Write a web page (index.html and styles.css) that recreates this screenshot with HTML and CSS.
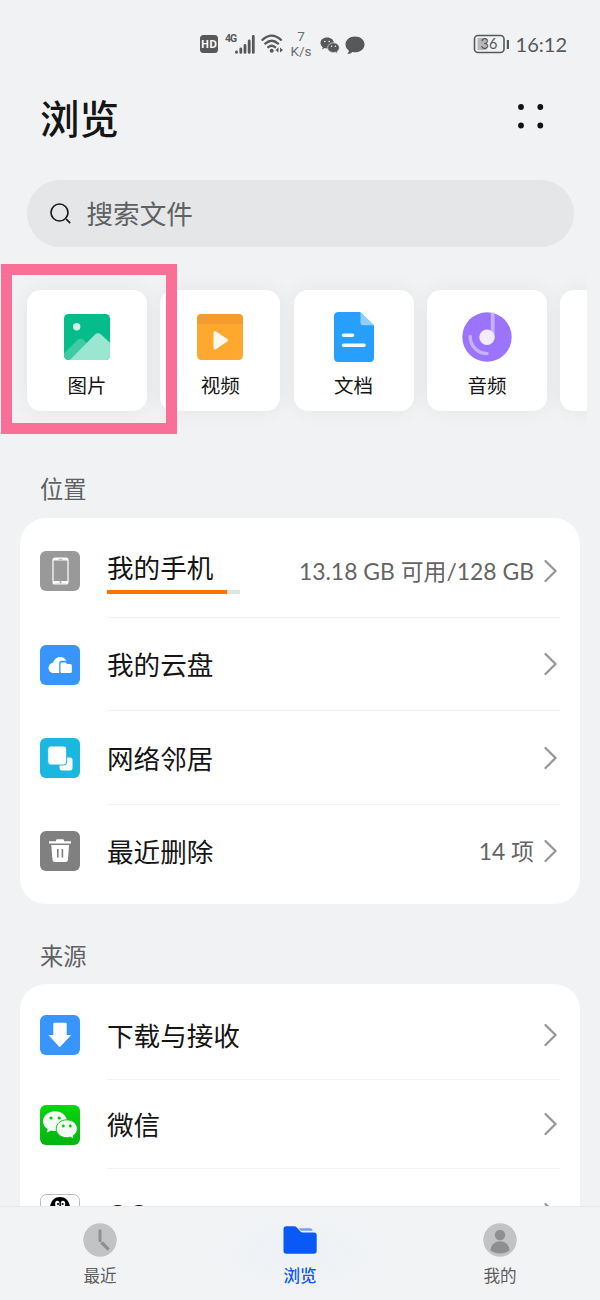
FILE: index.html
```html
<!DOCTYPE html>
<html lang="zh-CN">
<head>
<meta charset="utf-8">
<title>浏览</title>
<link rel="stylesheet" href="styles.css">
</head>
<body>
<div class="phone">
  <header class="status">
    <div class="status-left">
      <svg class="ic-hd" width="18" height="18" viewBox="0 0 18 18"><rect width="18" height="18" rx="3.5" fill="#56585a"/><text x="9" y="13" text-anchor="middle" class="hd-text">HD</text></svg>
      <span class="net">4G</span>
      <svg class="ic-signal" width="20" height="19" viewBox="0 0 20 19" stroke="#56585a" stroke-width="2.8" stroke-linecap="round"><path d="M1.5 17v.4M5.8 14v3.4M10 10.5v6.9M14.2 6v11.4M18.3 1.5v15.9"/></svg>
      <svg class="ic-wifi" width="23" height="20" viewBox="0 0 23 20"><g fill="none" stroke="#56585a" stroke-width="2.3" stroke-linecap="round"><path d="M1.4 5.8q9.3-8.4 18.6 0M4.3 9.6q6.4-5.8 12.8 0M7.3 13.2q3.4-2.8 6.8 0"/></g><circle cx="10.7" cy="16.8" r="2" fill="#56585a"/><path d="M17.5 13.5v5l-3-2.5zM19 13.5v5l3-2.5z" fill="#56585a"/></svg>
      <span class="speed"><span>7</span><span>K/s</span></span>
      <svg class="ic-wechat" width="20" height="17" viewBox="0 0 20 17"><path d="M7 .6C3.200.6.500 3 .5 6c0 1.800.9 3.200 2.300 4.200L2 12.500l2.700-1.400c.7.200 1.500.3 2.300.3 4 0 6.800-2.400 6.800-5.400S11 .6 7 .6z" fill="#56585a"/><path d="M13.500 5.800c-3.400 0-5.900 2.200-5.900 4.900s2.500 4.800 5.900 4.800c.7 0 1.400-.1 2-.3l2.200 1.200-.6-1.900c1.400-1 2.200-2.300 2.200-3.800 0-2.700-2.500-4.900-5.800-4.900z" fill="#56585a" stroke="#f1f2f4" stroke-width=".6"/><g fill="#f1f2f4"><circle cx="4.800" cy="4.500" r=".8"/><circle cx="9.200" cy="4.500" r=".8"/><circle cx="11.600" cy="9.200" r=".7"/><circle cx="15.400" cy="9.200" r=".7"/></g></svg>
      <svg class="ic-chat" width="20" height="19" viewBox="0 0 20 19"><path d="M10 .6C4.600.6.500 4 .5 8.400c0 2.600 1.300 4.600 3.300 6 .1 1.400-.5 2.500-1.600 3.500 2.200.1 4-.6 5.200-1.900.8.200 1.700.2 2.600.2 5.400 0 9.500-3.400 9.500-7.800S15.400.6 10 .6z" fill="#56585a"/></svg>
    </div>
    <div class="status-right">
      <svg width="36" height="20" viewBox="0 0 36 20"><rect x="1.500" y="1.500" width="29.500" height="17" rx="3.500" fill="none" stroke="#56585a" stroke-width="1.600"/><rect x="4.500" y="4" width="9" height="12" rx="1" fill="#b5b7b9"/><path d="M35 6v9" stroke="#56585a" stroke-width="2.400"/><text x="16" y="15" text-anchor="middle" class="battery-text">36</text></svg>
      <span class="clock">16:12</span>
    </div>
  </header>

  <div class="title-bar">
    <h1>浏览</h1>
    <svg class="more" width="28" height="26" viewBox="0 0 28 26" fill="#111"><circle cx="4" cy="4" r="2.900"/><circle cx="23.300" cy="4" r="2.900"/><circle cx="4" cy="22.500" r="2.900"/><circle cx="23.300" cy="22.500" r="2.900"/></svg>
  </div>

  <div class="search">
    <svg width="22" height="22" viewBox="0 0 22 22" fill="none" stroke="#1b1c1e" stroke-width="1.700" stroke-linecap="round"><circle cx="9.500" cy="9.500" r="8.500"/><path d="M16.700 16.700l3 3"/></svg>
    <span>搜索文件</span>
  </div>

  <div class="categories">
    <div class="cat highlighted">
      <svg width="50" height="50" viewBox="0 0 50 50"><defs><clipPath id="pic"><rect x="2" y="2" width="46" height="46" rx="4.500"/></clipPath></defs><g clip-path="url(#pic)"><path d="M0 0h50v50H0z" fill="#04bd8b"/><path d="M0 43.500L15.500 28q3-2.600 6 0l4 4V50H0z" fill="#3fcba4"/><path d="M6 50L33 22.500q3-2.700 6 0l11 10V50z" fill="#9be6d0"/><circle cx="14.700" cy="14.800" r="3.700" fill="#cef3e8"/></g></svg>
      <span>图片</span>
    </div>
    <div class="cat">
      <svg width="50" height="50" viewBox="0 0 50 50"><rect x="2" y="2" width="46" height="46" rx="4.500" fill="#fea82f"/><path d="M2 12V6.500Q2 2 6.500 2h37Q48 2 48 6.500V12z" fill="#f49d2e"/><path d="M20 20.500v15.600l11.500-7.800z" fill="#fff8ee" stroke="#fff8ee" stroke-width="3" stroke-linejoin="round"/></svg>
      <span>视频</span>
    </div>
    <div class="cat">
      <svg width="50" height="50" viewBox="0 0 50 50"><path d="M9.500 0H31l14 13.500V45.500Q45 50 40.500 50h-31Q5 50 5 45.500v-41Q5 0 9.500 0z" fill="#279fff"/><path d="M31.500 0L45 13.300H34q-2.500 0-2.500-2.500z" fill="#8ecffd"/><path d="M14.500 23.300h9M14.500 33.300H35" stroke="#f2f9ff" stroke-width="3.600" stroke-linecap="round"/></svg>
      <span>文档</span>
    </div>
    <div class="cat">
      <svg width="50" height="50" viewBox="0 0 50 50"><circle cx="25" cy="25" r="24.700" fill="#9c74fb"/><path d="M28.800.700h3.800V25h-3.800z" fill="#c7b1fd"/><path d="M8.200 24.500A17 17 0 0 0 25 41.600" fill="none" stroke="#c7b1fd" stroke-width="3.400" stroke-linecap="round"/><circle cx="25" cy="25.200" r="7.700" fill="#f1ecfe"/></svg>
      <span>音频</span>
    </div>
    <div class="cat"></div>
  </div>

  <main class="lists">
    <h2 class="heading-place">位置</h2>
    <section class="panel place">
      <div class="row">
        <svg class="icon" width="40" height="40" viewBox="0 0 40 40"><rect width="40" height="40" rx="6" fill="#999"/><rect x="13" y="7" width="15" height="26" rx="2.300" fill="none" stroke="#fff" stroke-width="1.200"/><path d="M13 8.300h15M13 31.200h15" stroke="#fff" stroke-width="2.600"/><circle cx="20.500" cy="31.300" r="1" fill="#999"/><path d="M18.500 8.300h4" stroke="#999" stroke-width=".8"/></svg>
        <div class="body"><div class="storage"><span class="label">我的手机</span><div class="meter"><div class="used" style="width:90%"></div></div></div><span class="info">13.18 GB 可用/128 GB</span><svg class="chev" width="14" height="24" viewBox="0 0 14 24"><path d="M1.500 2l10 10-10 10"/></svg></div>
      </div>
      <div class="row">
        <svg class="icon" width="40" height="40" viewBox="0 0 40 40"><rect width="40" height="40" rx="6" fill="#3795fd"/><path d="M14 28c-3.200 0-5.500-2.200-5.500-5.100 0-2.700 1.900-4.700 4.500-5.100 1-3.600 3.700-5.900 7.300-5.900 2.700 0 5 1.500 6.100 3.900h-5q-2.200 0-2.200 2.200v10z" fill="#fff"/><path d="M21.500 17.500h4l1.600 1.600h3.200q1.500 0 1.500 1.500V26.500q0 1.500-1.500 1.500h-8.800q-1 0-1-1V18.500q0-1 1-1z" fill="#fff"/></svg>
        <div class="body"><span class="label">我的云盘</span><svg class="chev" width="14" height="24" viewBox="0 0 14 24"><path d="M1.500 2l10 10-10 10"/></svg></div>
      </div>
      <div class="row">
        <svg class="icon" width="40" height="40" viewBox="0 0 40 40"><rect width="40" height="40" rx="6" fill="#1ab7e1"/><rect x="19.500" y="19.500" width="13" height="13" rx="2.500" fill="#fff"/><rect x="7.700" y="8" width="19" height="19" rx="3" fill="#fff" stroke="#1ab7e1" stroke-width="1"/></svg>
        <div class="body"><span class="label">网络邻居</span><svg class="chev" width="14" height="24" viewBox="0 0 14 24"><path d="M1.500 2l10 10-10 10"/></svg></div>
      </div>
      <div class="row">
        <svg class="icon" width="40" height="40" viewBox="0 0 40 40"><rect width="40" height="40" rx="6" fill="#808080"/><path d="M9 10.300h7V9.500q0-1.200 1.200-1.200h5.600q1.200 0 1.200 1.200v.8h7v2.300H9zM11.300 14h17.800l-1.200 15q-.2 2-2.200 2h-11q-2 0-2.200-2z" fill="#fff"/><path d="M17.800 18v8.500M22.400 18v8.500" stroke="#808080" stroke-width="1.600"/></svg>
        <div class="body"><span class="label">最近删除</span><span class="info">14 项</span><svg class="chev" width="14" height="24" viewBox="0 0 14 24"><path d="M1.500 2l10 10-10 10"/></svg></div>
      </div>
    </section>

    <h2 class="heading-source">来源</h2>
    <section class="panel source">
      <div class="row">
        <svg class="icon" width="40" height="40" viewBox="0 0 40 40"><rect width="40" height="40" rx="6" fill="#3795fd"/><path d="M14.500 7.700h11q1.200 0 1.200 1.200v11h4.500L20.500 31.500q-.8.600-1.600 0L8.500 20h4.800V8.900q0-1.200 1.200-1.200z" fill="#fff"/></svg>
        <div class="body"><span class="label">下载与接收</span><svg class="chev" width="14" height="24" viewBox="0 0 14 24"><path d="M1.500 2l10 10-10 10"/></svg></div>
      </div>
      <div class="row">
        <svg class="icon" width="40" height="40" viewBox="0 0 40 40"><defs><linearGradient id="wx" x2="0" y2="1"><stop stop-color="#05d60c"/><stop offset="1" stop-color="#06b312"/></linearGradient></defs><rect width="40" height="40" rx="6" fill="url(#wx)"/><path d="M15 6.200C8.300 6.200 3 10.700 3 16.200c0 3.200 1.800 6 4.700 7.800l-1 3.700 4.300-2.200c1.300.4 2.600.5 4 .5 6.700 0 12-4.300 12-9.800S21.700 6.200 15 6.200z" fill="#f4faf4"/><path d="M26.800 14.800c-6 0-10.600 3.900-10.600 8.900s4.600 9 10.600 9c1.300 0 2.500-.2 3.600-.5l3.500 1.800-.8-3.100c2.700-1.700 4.300-4.200 4.300-7.200 0-5-4.700-8.900-10.600-8.900z" fill="#f4faf4" stroke="#08c510" stroke-width="1"/><g fill="#08c510"><circle cx="11" cy="13" r="1.600"/><circle cx="19.200" cy="13" r="1.600"/><circle cx="23.300" cy="21" r="1.400"/><circle cx="30.300" cy="21" r="1.400"/></g></svg>
        <div class="body"><span class="label">微信</span><svg class="chev" width="14" height="24" viewBox="0 0 14 24"><path d="M1.500 2l10 10-10 10"/></svg></div>
      </div>
      <div class="row">
        <svg class="icon" width="40" height="40" viewBox="0 0 40 40"><rect x=".500" y=".500" width="39" height="39" rx="6" fill="#fff" stroke="#bbb"/><path d="M9.500 18C9.500 8 13.500 3 20 3s10.500 5 10.500 15v12h-21z" fill="#000"/><ellipse cx="17.300" cy="10" rx="2.200" ry="3.200" fill="#fff"/><ellipse cx="23" cy="10" rx="2.200" ry="3.200" fill="#fff"/><circle cx="18" cy="10" r="1.100"/><circle cx="22.600" cy="10" r="1.100"/></svg>
        <div class="body"><span class="label latin">QQ</span><svg class="chev" width="14" height="24" viewBox="0 0 14 24"><path d="M1.500 2l10 10-10 10"/></svg></div>
      </div>
    </section>
  </main>

  <nav class="tabs">
    <div class="tab">
      <svg width="34" height="34" viewBox="0 0 34 34"><circle cx="17" cy="17" r="16.700" fill="#c2c3c5"/><path d="M17 7.800v10" stroke="#8e8f91" stroke-width="3" stroke-linecap="round"/><path d="M19.500 20.500l5 5" stroke="#8e8f91" stroke-width="3.200" stroke-linecap="square"/></svg>
      <span>最近</span>
    </div>
    <div class="tab active">
      <svg width="34" height="34" viewBox="0 0 34 34"><path d="M3.300 3.300h8.200q1.200 0 2 .9l4.200 4.600q.8.800 2 .8H31q2.700 0 2.700 2.700V28q0 2.700-2.700 2.700H3.300Q.5 30.700.5 28V6q0-2.700 2.800-2.700z" fill="#0a59f7"/><path d="M15.800 5.200h11.800q1.500 0 2.200 2.500H18z" fill="#6da0f8"/></svg>
      <span>浏览</span>
    </div>
    <div class="tab">
      <svg width="34" height="34" viewBox="0 0 34 34"><circle cx="17" cy="17" r="16.700" fill="#c2c3c5"/><circle cx="17" cy="12" r="5.200" fill="#8e8f91"/><path d="M7.300 27.200C8.500 21.500 12 18.300 17 18.300s8.500 3.200 9.700 8.900Q22.500 30.500 17 30.500t-9.700-3.300z" fill="#8e8f91"/></svg>
      <span>我的</span>
    </div>
  </nav>
</div>
</body>
</html>
```
FILE: styles.css
```css
*, *::before, *::after { box-sizing: border-box; }
body {
  margin: 0;
  background: #f1f2f4;
  font-family: "Noto Sans CJK SC", sans-serif;
  color: #151515;
}
svg { display: block; flex: none; }
h1, h2 { margin: 0; font-weight: 400; }
.phone {
  width: 600px;
  height: 1300px;
  display: flex;
  flex-direction: column;
  overflow: hidden;
}

.status {
  height: 88px;
  flex: none;
  display: flex;
  justify-content: space-between;
  align-items: center;
  padding: 0 33px 0 200px;
  color: #56585a;
  font-family: Lato, sans-serif;
}
.status-left, .status-right { display: flex; align-items: center; }
.hd-text { font: 700 10.5px "Open Sans", sans-serif; fill: #fff; }
.net {
  font: 700 10.5px/12px Roboto, sans-serif;
  margin: 0 0 10px 7px;
  width: 10px;
  letter-spacing: -1px;
  white-space: nowrap;
}
.ic-wifi { margin-left: 6px; }
.speed {
  display: flex;
  flex-direction: column;
  align-items: center;
  width: 22px;
  margin-left: 6px;
  font: 13.5px/15px Roboto, sans-serif;
  color: #6c6e70;
}
.ic-wechat { margin: 3px 0 0 8px; }
.ic-chat { margin: 2px 0 0 5px; }
.battery-text { font: 14.5px Lato, sans-serif; fill: #56585a; }
.clock { font-size: 20px; line-height: 24px; margin-left: 7px; }

.title-bar {
  height: 92px;
  flex: none;
  display: flex;
  justify-content: space-between;
  padding: 0 55.5px 0 40px;
}
.title-bar h1 { font-size: 39.5px; line-height: 57px; font-weight: 500; }
.more { margin-top: 15px; }

.search {
  flex: none;
  height: 67px;
  margin: 0 26.5px;
  padding: 0 23px;
  border-radius: 34px;
  background: #e5e6e8;
  display: flex;
  align-items: center;
  gap: 15px;
  color: #606163;
  font-size: 26.6px;
  line-height: 40px;
}
.search span { padding-bottom: 1px; }

.categories {
  flex: none;
  width: 587px;
  height: 187px;
  margin-top: 17px;
  padding: 26px 0 0 27px;
  overflow: hidden;
  display: flex;
  gap: 13.3px;
}
.cat {
  position: relative;
  flex: none;
  width: 120px;
  height: 121px;
  border-radius: 14px;
  background: #fff;
  box-shadow: 0 0 22px rgba(0, 0, 0, .055);
  display: flex;
  flex-direction: column;
  align-items: center;
  padding-top: 22px;
  font-size: 19.5px;
  line-height: 28px;
}
.cat span { margin-top: 8.500px; }
.highlighted { z-index: 1; }
.highlighted::after {
  content: "";
  position: absolute;
  left: -26px;
  top: -26px;
  width: 176px;
  height: 170px;
  border: 11px solid #f96f95;
}

.lists { flex: 1; min-height: 0; overflow: hidden; padding: 0 20px; }
.lists h2 {
  padding-left: 20px;
  font-size: 23.3px;
  line-height: 34px;
  color: #606163;
}
.heading-place { margin: 20px 0 12.5px; }
.heading-source { margin: 34px 0 12px; }
.panel { background: #fff; border-radius: 26px; --row: 93.3px; }
.place { padding: 7.3px 0 6px; }
.source { padding: 6.5px 0; --row: 89.5px; }
.row {
  height: var(--row);
  padding: 0 20px;
  display: flex;
  align-items: center;
  gap: 27px;
}
.icon { margin-bottom: .4px; }
.body {
  flex: 1;
  height: 100%;
  display: flex;
  align-items: center;
  border-bottom: 1px solid #f3f3f3;
  padding-right: 2px;
}
.row:last-child .body { border-bottom-color: transparent; }
.label { font-size: 26.6px; line-height: 40px; }
.latin { font-family: Lato, sans-serif; }
.storage { width: 133px; margin-top: -1.4px; }
.storage .label { display: block; }
.meter { height: 4px; margin-top: 3px; background: #e2e2e2; }
.used { height: 100%; background: #ff7500; }
.info {
  margin-left: auto;
  margin-right: 10px;
  padding-top: 1px;
  font-family: Lato, "Noto Sans CJK SC", sans-serif;
  font-size: 22.9px;
  line-height: 34px;
  color: #646464;
  white-space: nowrap;
}
.chev { margin-left: auto; fill: none; stroke: #969696; stroke-width: 2.2; stroke-linecap: round; }
.info + .chev { margin-left: 0; }

.tabs {
  flex: none;
  height: 94px;
  display: grid;
  grid-template-columns: repeat(3, 1fr);
  background: #f2f3f5;
  border-top: 1px solid #e9eaec;
}
.tab {
  display: flex;
  flex-direction: column;
  align-items: center;
  padding-top: 16px;
  font-size: 16.6px;
  line-height: 24px;
  color: #5c5d5f;
}
.tab span { margin-top: 6px; }
.active {
  color: #0a59f7;
  font-weight: 500;
  background: radial-gradient(closest-side, #edf2f6, #f2f3f5);
}
```
